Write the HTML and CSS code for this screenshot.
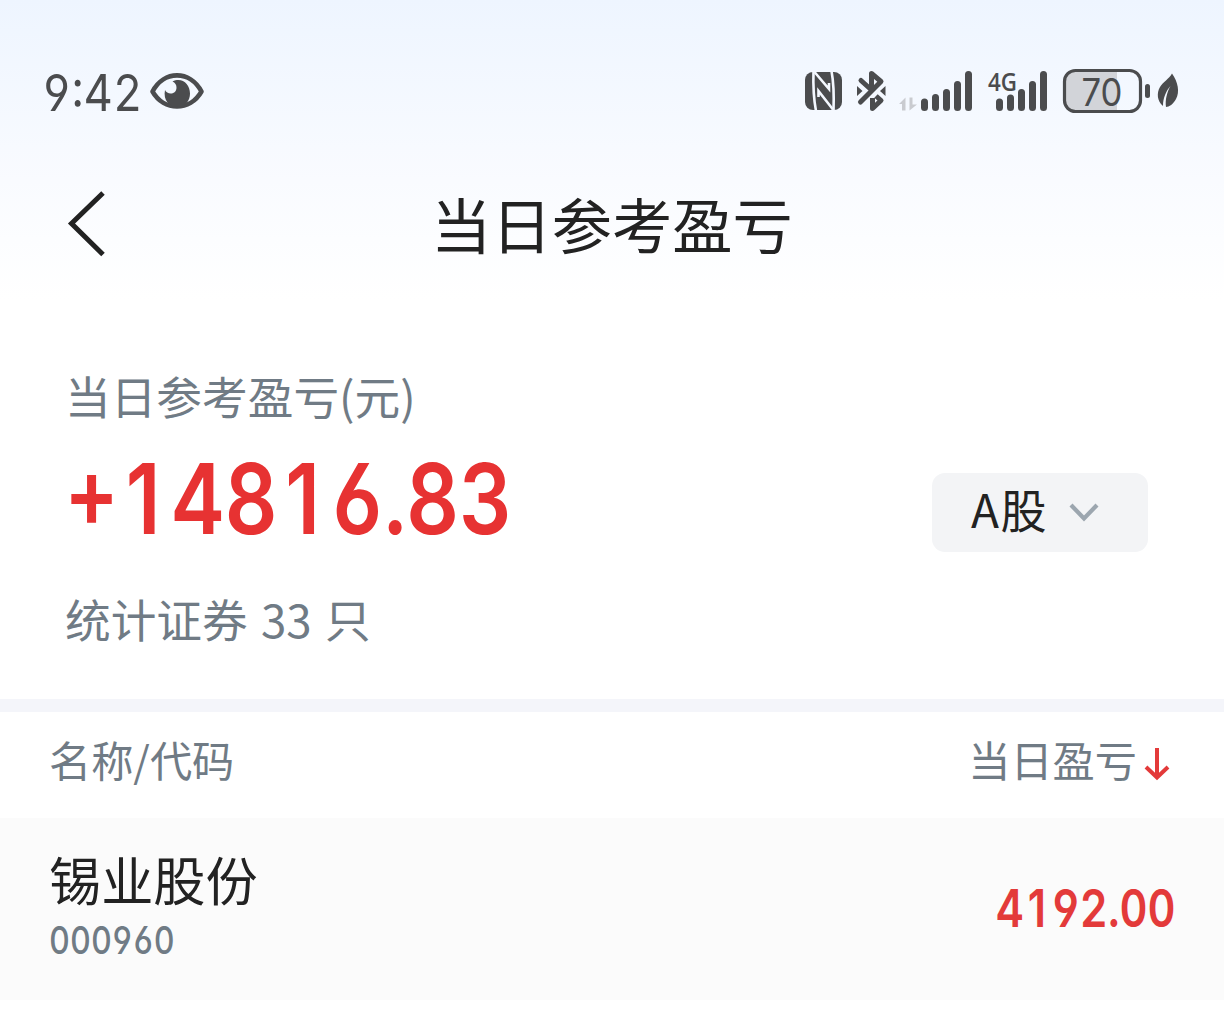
FILE: index.html
```html
<!DOCTYPE html>
<html lang="zh-CN">
<head>
<meta charset="utf-8">
<title>当日参考盈亏</title>
<link rel="stylesheet" href="styles.css">
</head>
<body>
<header class="top">
  <div class="status">
    <div class="status-left">
      <span class="time num">9:42</span>
      <svg class="eye" width="56" height="40" viewBox="0 0 56 40"><path d="M3.500 19.500C15-2 41-2 52.500 19.500C41 39.500 15 39.500 3.500 19.500Z" fill="none" stroke="#4b4c4e" stroke-width="4.600" stroke-linejoin="round"/><path d="M23.500 9.500C33 5 41 12 41 21.500C41 29 36 35 28.500 35C20 35 14 28 16 18C18 23 27 23 27.500 16C27.700 13 26 10.500 23.500 9.500Z" fill="#4b4c4e"/></svg>
    </div>
    <svg class="signals" width="380" height="50" viewBox="800 66 380 50" fill="#4b4c4e">
      <rect x="805" y="72" width="37" height="38" rx="8"/>
      <path d="M813.500 71C813 86 813.500 98 816 111M831.500 71C834 84 834 98 833.500 111" fill="none" stroke="#f4f8ff" stroke-width="2.600"/>
      <path d="M814.500 72L829 89V83M833 109.500L818.500 91V97" fill="none" stroke="#f4f8ff" stroke-width="2.600"/>
      <path d="M872.500 98V108.500L881 100.500L876 96" fill="none" stroke="#4b4c4e" stroke-width="5" stroke-linejoin="round"/>
      <path d="M861 80.500L871.500 90V73.500L881 81.500L860.500 102" fill="none" stroke="#4b4c4e" stroke-width="5" stroke-linejoin="round" stroke-linecap="round"/>
      <path d="M857 86L862.500 91L857 96ZM885.500 86L880 91L885.500 96Z"/>
      <path d="M899 104L905.500 97.500V110.500H902V104ZM909.500 97.500H912.500V104.500H917L909.500 110.500Z" fill="#c9cbd0"/>
      <path d="M924.500 102V107.500M935.500 97.500V107.500M946.500 92.500V107.500M957.500 84.500V107.500M968.500 74.500V107.500" stroke="#4b4c4e" stroke-width="7" stroke-linecap="round"/>
      <text class="net" x="988" y="90.500" textLength="29" lengthAdjust="spacingAndGlyphs">4G</text>
      <path d="M999.500 102V107.500M1010.500 98V107.500M1021.500 92.500V107.500M1032.500 84.500V107.500M1043.500 74.500V107.500" stroke="#4b4c4e" stroke-width="7" stroke-linecap="round"/>
      <path d="M1074 71H1117V111H1074Q1065 111 1065 101V81Q1065 71 1074 71Z" fill="#d2d4d9"/>
      <rect x="1064.500" y="70.500" width="76" height="41" rx="11" fill="none" stroke="#4b4c4e" stroke-width="3.200"/>
      <text class="level" x="1081.500" y="105.500" textLength="41" lengthAdjust="spacingAndGlyphs">70</text>
      <rect x="1145" y="84" width="5" height="14" rx="2.500"/>
      <path d="M1172 73.500C1178 82 1180 92 1176 99C1173.500 104 1169 107 1166 107C1165 100 1167 92 1170.500 86C1166 91 1163 98 1163 106C1157 101 1156.500 93 1160 87C1163 82 1169 79 1172 73.500Z"/>
    </svg>
  </div>
  <nav class="nav">
    <svg class="back" width="40" height="68" viewBox="0 0 40 68"><path d="M36 3L4.500 33.500L36 64.500" fill="none" stroke="#222" stroke-width="5"/></svg>
    <h1 class="title">当日参考盈亏</h1>
  </nav>
</header>
<section class="summary">
  <div class="figures">
    <div class="label">当日参考盈亏(元)</div>
    <div class="total num"><span class="sign">+</span><span class="one">1</span>48<span class="one">1</span>6.83</div>
    <div class="label count">统计证券 33 只</div>
  </div>
  <button class="market"><span>A股</span><svg width="32" height="22" viewBox="0 0 32 22"><path d="M3 3L16 16.500L29 3" fill="none" stroke="#9ca6af" stroke-width="4.200"/></svg></button>
</section>
<div class="cols">
  <span>名称/代码</span>
  <span class="sort">当日盈亏<svg width="28" height="36" viewBox="0 0 28 36" fill="none" stroke="#e33a3a"><path d="M14 1V31" stroke-width="4"/><path d="M3 20L14 30.500L25 20" stroke-width="4"/></svg></span>
</div>
<div class="row">
  <div class="stock">
    <div class="name">锡业股份</div>
    <div class="code num">000960</div>
  </div>
  <div class="profit num">4<span class="one">1</span>92.00</div>
</div>
</body>
</html>
```
FILE: styles.css
```css
* { box-sizing: border-box; }
body {
  margin: 0;
  width: 1224px;
  height: 1023px;
  overflow: hidden;
  background: #fff;
  color: #222;
  font-family: "Noto Sans CJK SC", sans-serif;
}
svg { display: block; flex: none; }
.num {
  font-family: Inter, sans-serif;
  font-feature-settings: "tnum", "cv03", "cv04";
  white-space: nowrap;
  transform-origin: left center;
}
.one {
  display: inline-block;
  width: .645em;
  padding-right: .04em;
  text-align: center;
  font-feature-settings: "tnum" 0;
}
.sign { font-feature-settings: "tnum", "case"; }
.top {
  height: 300px;
  padding-top: 66px;
  background: linear-gradient(#eef5ff, #f9fbff 60%, #fff);
}
.status {
  display: flex;
  justify-content: space-between;
  height: 50px;
  padding: 0 44px 0 42px;
}
.status-left { display: flex; }
.time {
  width: 107px;
  font-size: 51px;
  line-height: 54px;
  color: #4b4c4e;
  transform: scaleX(.89);
}
.eye { margin-top: 6px; }
.signals { overflow: visible; }
.net { font: 600 26px "Open Sans", sans-serif; }
.level { font: 400 38px Inter, sans-serif; }
.nav {
  display: grid;
  grid-template-columns: 66px 1fr 66px;
  height: 90px;
  margin-top: 64px;
  align-items: center;
}
.back { margin: -2px 0 0 67px; }
.title {
  margin: -5px 0 0;
  text-align: center;
  font-size: 60.3px;
  font-weight: 400;
  line-height: 90px;
}
.summary {
  display: flex;
  justify-content: space-between;
  height: 412px;
  padding: 62px 76px 0 65px;
  border-bottom: 13px solid #f4f5fa;
}
.label {
  font-size: 45.7px;
  line-height: 66px;
  color: #707b85;
}
.count { word-spacing: 3px; }
.total {
  height: 157px;
  font-size: 97px;
  font-weight: 600;
  line-height: 142px;
  color: #e73232;
  transform: scaleX(.848);
}
.market {
  display: flex;
  align-items: center;
  width: 216px;
  height: 79px;
  margin-top: 111px;
  padding: 0 0 0 39px;
  gap: 20px;
  border: 0;
  border-radius: 13px;
  background: #f3f4f6;
  color: #222;
  font: 400 46px/70px "Noto Sans CJK SC", sans-serif;
}
.market span { margin-top: -9px; letter-spacing: 1.5px; }
.cols {
  display: flex;
  justify-content: space-between;
  height: 106px;
  padding: 16px 53px 0 49px;
  font-size: 42.2px;
  line-height: 62px;
  color: #707b85;
}
.sort { display: flex; gap: 6px; }
.sort svg { margin-top: 19px; }
.row {
  display: flex;
  justify-content: space-between;
  height: 182px;
  padding: 24px 48px 0 49px;
  background: #fbfbfb;
}
.name { font-size: 52.2px; line-height: 72px; }
.code {
  font-size: 38.5px;
  line-height: 52px;
  font-weight: 500;
  color: #707b85;
  transform: scaleX(.84);
}
.profit {
  font-size: 51.5px;
  line-height: 132px;
  font-weight: 600;
  color: #e33a3a;
  transform: scaleX(.842);
  transform-origin: right center;
}
```
